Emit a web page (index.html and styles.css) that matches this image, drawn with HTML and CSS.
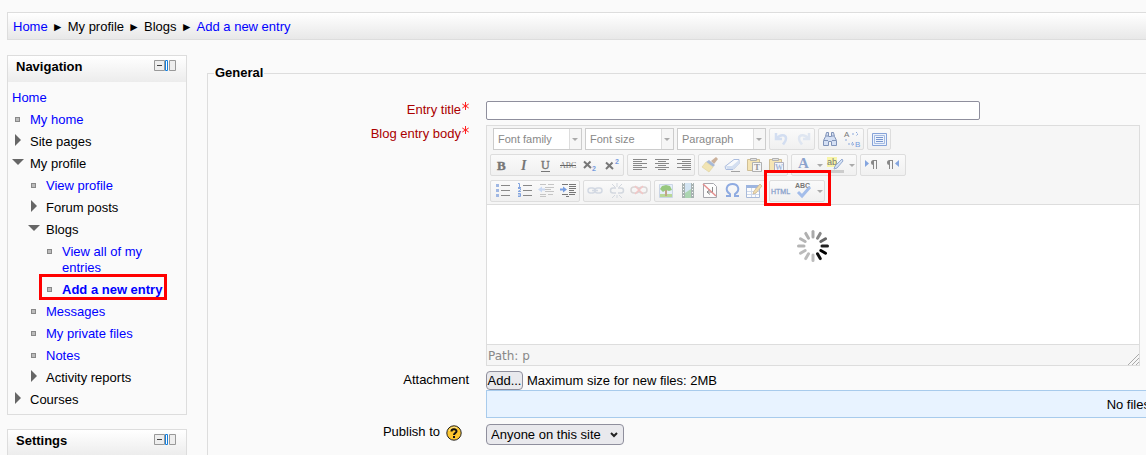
FILE: index.html
```html
<!DOCTYPE html>
<html lang="en">
<head>
<meta charset="utf-8">
<title>Add a new entry</title>
<link rel="stylesheet" href="styles.css">
</head>
<body>
<nav class="crumbs" aria-label="Breadcrumb">
  <a href="#">Home</a><span class="sep">►</span><span>My profile</span><span class="sep">►</span><span>Blogs</span><span class="sep">►</span><a href="#">Add a new entry</a>
</nav>
<div class="page">
  <aside class="side">
    <section class="block">
      <header class="block-head">
        <h2>Navigation</h2>
        <svg class="dock" viewBox="0 0 22 11"><path class="dock-box" d="M.5.5h10v10H.5zM15.5.5h6v10h-6z"/><path class="dock-bar" d="M11.5.5h2v10h-2z"/><path class="dock-minus" d="M3 5.5h5"/></svg>
      </header>
      <ul class="tree">
        <li class="root"><a href="#">Home</a></li>
        <li class="leaf"><a href="#">My home</a></li>
        <li class="shut">Site pages</li>
        <li class="open">My profile
          <ul>
            <li class="leaf"><a href="#">View profile</a></li>
            <li class="shut">Forum posts</li>
            <li class="open">Blogs
              <ul>
                <li class="leaf"><a href="#">View all of my entries</a></li>
                <li class="leaf current"><a href="#">Add a new entry</a><span class="mark mark-nav"></span></li>
              </ul>
            </li>
            <li class="leaf"><a href="#">Messages</a></li>
            <li class="leaf"><a href="#">My private files</a></li>
            <li class="leaf"><a href="#">Notes</a></li>
            <li class="shut">Activity reports</li>
          </ul>
        </li>
        <li class="shut">Courses</li>
      </ul>
    </section>
    <section class="block">
      <header class="block-head">
        <h2>Settings</h2>
        <svg class="dock" viewBox="0 0 22 11"><path class="dock-box" d="M.5.5h10v10H.5zM15.5.5h6v10h-6z"/><path class="dock-bar" d="M11.5.5h2v10h-2z"/><path class="dock-minus" d="M3 5.5h5"/></svg>
      </header>
    </section>
  </aside>
  <main class="main">
    <form>
      <fieldset class="general">
        <legend>General</legend>
        <div class="row">
          <label class="label required" for="title">Entry title<svg class="star" viewBox="0 0 7 8"><path d="M3.5 0v8M.3 2l6.400 4M6.700 2L.3 6"/></svg></label>
          <input class="title" id="title" type="text">
        </div>
        <div class="row">
          <label class="label required" for="body">Blog entry body<svg class="star" viewBox="0 0 7 8"><path d="M3.5 0v8M.3 2l6.400 4M6.700 2L.3 6"/></svg></label>
          <div class="editor">
            <div class="tools">
              <div class="bar bar-first">
                <button type="button" class="combo"><span>Font family</span><i></i></button>
                <button type="button" class="combo"><span>Font size</span><i></i></button>
                <button type="button" class="combo"><span>Paragraph</span><i></i></button>
                <div class="group">
                  <button type="button" aria-label="Undo"><svg viewBox="0 0 20 20"><path d="M5 4v6h6M5.500 9.500C9 5 15 5 15 9.500c0 3-2 4.500-3 6" fill="none" stroke="#d3def1" stroke-width="2.500"/></svg></button>
                  <button type="button" aria-label="Redo"><svg viewBox="0 0 20 20"><path d="M16 4v6h-6M15.500 9.500C12 5 6 5 6 9.500c0 3 2 4.500 3 6" fill="none" stroke="#dfe6f1" stroke-width="2.500"/></svg></button>
                </div>
                <div class="group">
                  <button type="button" aria-label="Find"><svg viewBox="0 0 20 20" fill="#d5e0f4" stroke="#8093b8"><path d="M6.500 3.500h2v4h3v-4h2l1 4 2 4v5h-5v-4h-3v4h-5v-5l2-4z"/><path d="M4 11.500h4M12 11.500h4M6 7h2M12 7h2"/></svg></button>
                  <button type="button" aria-label="Find and replace"><svg viewBox="0 0 20 20"><text x="2" y="8" font-size="8">A</text><text class="digit" x="13" y="18" font-size="8">B</text><path d="M10 5h3M14 3l2 2-2 2M4 10v3M6 15h5M10 13l2 2-2 2" fill="none" stroke="#8da9dc" stroke-dasharray="2 1"/></svg></button>
                </div>
                <div class="group">
                  <button type="button" aria-label="Full screen"><svg viewBox="0 0 20 20" fill="none"><path d="M3.500 4.500h14v12h-14z" fill="#edf3fc" stroke="#86a3d8"/><path d="M5.500 6.500h10v8h-10z" stroke="#a5bbe2"/><path d="M7 8.500h7M7 10.500h7M7 12.500h7" stroke="#7896ce"/></svg></button>
                </div>
              </div>
              <div class="bar">
                <div class="group">
                  <button type="button" aria-label="Bold"><svg viewBox="0 0 20 20"><text class="serif" x="5" y="15" font-size="13" font-weight="bold" stroke="#777" stroke-width=".4">B</text></svg></button>
                  <button type="button" aria-label="Italic"><svg viewBox="0 0 20 20"><text class="serif" x="7" y="15" font-size="14" font-style="italic" font-weight="bold">I</text></svg></button>
                  <button type="button" aria-label="Underline"><svg viewBox="0 0 20 20"><text class="serif" x="5" y="14" font-size="12" stroke="#777" stroke-width=".4">U</text><path d="M5 16.500h9" stroke="#777"/></svg></button>
                  <button type="button" aria-label="Strikethrough"><svg viewBox="0 0 20 20"><text class="serif" x="2" y="13" font-size="8">ABC</text><path d="M2 10.500h16" stroke="#666"/></svg></button>
                  <button type="button" aria-label="Subscript"><svg viewBox="0 0 20 20"><path d="M4 6.500l7 6.500M10.500 6.500L4 13" stroke="#777" stroke-width="2"/><text class="digit" x="12" y="16" font-size="7" font-weight="bold">2</text></svg></button>
                  <button type="button" aria-label="Superscript"><svg viewBox="0 0 20 20"><path d="M4 7.500l7 6.500M10.500 7.500L4 14" stroke="#777" stroke-width="2"/><text class="digit" x="13" y="9" font-size="7" font-weight="bold">2</text></svg></button>
                </div>
                <div class="group">
                  <button type="button" aria-label="Align left"><svg viewBox="0 0 20 20"><path d="M4 4.500h14M4 6.500h9M4 8.500h14M4 10.500h9M4 12.500h14M4 14.500h9" stroke="#888"/></svg></button>
                  <button type="button" aria-label="Align center"><svg viewBox="0 0 20 20"><path d="M4 4.500h14M7 6.500h8M4 8.500h14M7 10.500h8M4 12.500h14M7 14.500h8" stroke="#888"/></svg></button>
                  <button type="button" aria-label="Align right"><svg viewBox="0 0 20 20"><path d="M4 4.500h14M9 6.500h9M4 8.500h14M9 10.500h9M4 12.500h14M9 14.500h9" stroke="#888"/></svg></button>
                </div>
                <div class="group soft">
                  <button type="button" aria-label="Clean up"><svg viewBox="0 0 20 20"><path d="M16 2l2 2-4 5-3-3z" fill="#bd9a7d"/><path d="M9 5l6 5-2 2-7-5z" fill="#8da5ce"/><path d="M6 7l7 5-4 5-7-5z" fill="#f0df9e" stroke="#d6c67f" stroke-width=".6"/></svg></button>
                  <button type="button" aria-label="Remove formatting"><svg viewBox="0 0 20 20"><path d="M12 4.500h5v4l-6 6H4l-1-3z" fill="#fafcff" stroke="#91a9d7"/><path d="M4 11l6 0 7-6v4l-6 5H5z" fill="#c9d8f0"/><path d="M9 16.500h9" stroke="#888"/></svg></button>
                  <button type="button" aria-label="Paste as plain text"><svg viewBox="0 0 20 20"><path d="M3.500 4.500h12v11h-12z" fill="#f5df9f" stroke="#c3ad76"/><path d="M6.500 3.500h6v2h-6z" fill="#ddd" stroke="#999"/><path d="M8.500 7.500h9v9h-9z" fill="#f8f8f8" stroke="#999"/><text class="serif" x="10" y="15" font-size="9" font-weight="bold">T</text></svg></button>
                  <button type="button" aria-label="Paste from Word"><svg viewBox="0 0 20 20"><path d="M3.500 4.500h12v11h-12z" fill="#f5df9f" stroke="#c3ad76"/><path d="M6.500 3.500h6v2h-6z" fill="#ddd" stroke="#999"/><path d="M8.500 7.500h9v9h-9z" fill="#f2f6ff" stroke="#99a"/><text class="serif blue" x="9" y="15" font-size="8" font-weight="bold">W</text></svg></button>
                </div>
                <div class="group">
                  <button type="button" class="wide" aria-label="Text color"><svg viewBox="0 0 20 20"><text class="serif blue" x="4" y="13" font-size="15" font-weight="bold">A</text><path d="M2 16.500h16" stroke="#bbb" stroke-width="3"/></svg><i></i></button>
                  <button type="button" class="wide" aria-label="Highlight color"><svg viewBox="0 0 20 20"><path d="M1 2h10v10H1z" fill="#f8f5a8"/><text x="1" y="10" font-size="9">ab</text><path d="M16 4l1 2-6 7-3 1 1-3z" fill="#d5e2f5" stroke="#95aad0"/><path d="M2 16.500h16" stroke="#ccc" stroke-width="3"/></svg><i></i></button>
                </div>
                <div class="group">
                  <button type="button" aria-label="Left to right"><svg viewBox="0 0 20 20"><path d="M3 5v7l4-3.500z" fill="#84a5df"/><path d="M11 5.500h4M11.500 5v9M14.500 5v9" stroke="#888"/><path d="M11.500 5a2.500 2.500 0 0 0 0 5z" fill="#888"/></svg></button>
                  <button type="button" aria-label="Right to left"><svg viewBox="0 0 20 20"><path d="M15 5v7l-4-3.500z" fill="#84a5df"/><path d="M5 5.500h4M5.500 5v9M8.500 5v9" stroke="#888"/><path d="M5.500 5a2.500 2.500 0 0 0 0 5z" fill="#888"/></svg></button>
                </div>
              </div>
              <div class="bar">
                <div class="group">
                  <button type="button" aria-label="Bulleted list"><svg viewBox="0 0 20 20"><path d="M9 4.500h9M9 9.500h9M9 14.500h9" stroke="#888"/><path d="M4 3h3v3H4zM4 8h3v3H4zM4 13h3v3H4z" fill="#9fb7e3"/></svg></button>
                  <button type="button" aria-label="Numbered list"><svg viewBox="0 0 20 20"><path d="M9 4.500h9M9 9.500h9M9 14.500h9" stroke="#888"/><path d="M4 2.500h1.500v4M4 6.500h3M4 7.500h2.500v1.500L4 10.500h3M4 12.500h2.500v3H4M4 14h2" stroke="#84a5df" fill="none"/></svg></button>
                  <button type="button" aria-label="Outdent"><svg viewBox="0 0 20 20"><path d="M4 3.500h6M12 3.500h6M9 6.500h9M9 8.500h6M9 10.500h9M4 13.500h6M12 13.500h5M4 15.500h6" stroke="#c5c5c5"/><path d="M2 8.500l4-3v6z" fill="#cad9f3"/><path d="M5 8.500h4" stroke="#cad9f3" stroke-width="2"/></svg></button>
                  <button type="button" aria-label="Indent"><svg viewBox="0 0 20 20"><path d="M4 3.500h6M11 3.500h7M11 5.500h7M11 7.500h7M11 9.500h5M11 11.500h7M4 13.500h6M11 13.500h6M8 15.500h3" stroke="#777"/><path d="M9 8.500l-4-3v6z" fill="#789ee0"/><path d="M2 8.500h4" stroke="#789ee0" stroke-width="2"/></svg></button>
                </div>
                <div class="group">
                  <button type="button" aria-label="Insert link"><svg viewBox="0 0 20 20" fill="none" stroke="#d3d9e3" stroke-width="1.500"><rect x="3" y="7" width="7" height="5" rx="2.500"/><rect x="10" y="7" width="7" height="5" rx="2.500"/><path d="M7 9.500h6"/></svg></button>
                  <button type="button" aria-label="Unlink"><svg viewBox="0 0 20 20" fill="none" stroke="#d3d8df" stroke-width="1.500"><path d="M9 7H6a2 2 0 0 0 0 5h3M11 7h3a2 2 0 0 1 0 5h-3"/><path d="M10 2v4M5 3l3 3M15 3l-3 3M10 14v3M8 14l-3 3M12 14l3 3" stroke-width="1"/></svg></button>
                  <button type="button" aria-label="Prevent automatic links"><svg viewBox="0 0 20 20" fill="none" stroke="#d9d4d4" stroke-width="1.500"><rect x="2" y="6" width="8" height="6" rx="3"/><rect x="10" y="6" width="8" height="6" rx="3"/><path d="M6 5l8 8M14 5l-8 8" stroke="#f3c6c6"/></svg></button>
                </div>
                <div class="group soft">
                  <button type="button" aria-label="Insert image"><svg viewBox="0 0 20 20"><path d="M3.500 3.500h13v13h-13z" fill="#e1edfc" stroke="#bdcbe0"/><path d="M4 13h12v3H4z" fill="#a6cf78"/><path d="M9 9h2v6H9z" fill="#b08864"/><path d="M4 8l2-3 4-1 4 1 2 4-3 1-3-1-3 2z" fill="#79b958"/></svg></button>
                  <button type="button" aria-label="Insert media"><svg viewBox="0 0 20 20"><path d="M4 2h12v15H4z" fill="#8f9d9c"/><path d="M7 2h6v15H7z" fill="#c8dff2"/><path d="M7 12l6-4v9H7z" fill="#94cb9b"/><path d="M5.500 2v15M14.500 2v15" stroke="#fff" stroke-dasharray="1 2"/></svg></button>
                  <button type="button" aria-label="Insert nonbreaking space"><svg viewBox="0 0 20 20" fill="none"><path d="M3.500 2.500h10l3 3v11h-13z" fill="#fff" stroke="#8c8c94"/><path d="M12.500 6v5H7M10 8.500l-3 2.500 3 2.500" stroke="#666"/><path d="M3 3l13 12" stroke="#df6c6c" stroke-width="1.500"/></svg></button>
                  <button type="button" aria-label="Insert custom character"><svg viewBox="0 0 20 20"><path d="M4 15h4v-2C2 9 5 3 10.500 3S19 9 13 13v2h4" fill="none" stroke="#6c92d9" stroke-width="2"/></svg></button>
                  <button type="button" aria-label="Insert table"><svg viewBox="0 0 20 20"><path d="M2.500 4.500h13v12h-13z" fill="#fff" stroke="#8fa7d1"/><path d="M2 4h14v3H2z" fill="#7f9fd8"/><path d="M3 10.500h12M3 13.500h12M7.500 7v9M11.500 7v9" stroke="#c2d0e8"/><path d="M16 3l2 2-6 7-3 1 1-3z" fill="#efd69a" stroke="#b99b6c" stroke-width=".7"/></svg></button>
                </div>
                <div class="group">
                  <button type="button" aria-label="Edit HTML source"><svg viewBox="0 0 20 20"><text class="blue" x="0" y="13" font-size="7" stroke="#8ca3cc" stroke-width=".3">HTML</text></svg></button>
                  <button type="button" class="wide" aria-label="Check spelling"><svg viewBox="0 0 20 20"><text x="1" y="7" font-size="7" font-weight="bold">ABC</text><path d="M4 11l4 4 8-9" fill="none" stroke="#a3bdea" stroke-width="3"/></svg><i></i></button>
                  <span class="mark mark-tool"></span>
                </div>
              </div>
            </div>
            <div class="canvas" id="body" role="textbox" aria-label="Blog entry body">
              <svg class="spinner" viewBox="-16 -16 32 32">
                <g stroke-width="3" stroke-linecap="round">
                  <path d="M9 0h5.500" stroke="#222"/>
                  <path d="M9 0h5.500" stroke="#000" transform="rotate(30)"/>
                  <path d="M9 0h5.500" stroke="#111" transform="rotate(60)"/>
                  <path d="M9 0h5.500" stroke="#bbb" transform="rotate(90)"/>
                  <path d="M9 0h5.500" stroke="#bbb" transform="rotate(120)"/>
                  <path d="M9 0h5.500" stroke="#bbb" transform="rotate(150)"/>
                  <path d="M9 0h5.500" stroke="#b5b5b5" transform="rotate(180)"/>
                  <path d="M9 0h5.500" stroke="#b5b5b5" transform="rotate(210)"/>
                  <path d="M9 0h5.500" stroke="#b0b0b0" transform="rotate(240)"/>
                  <path d="M9 0h5.500" stroke="#aaa" transform="rotate(270)"/>
                  <path d="M9 0h5.500" stroke="#888" transform="rotate(300)"/>
                  <path d="M9 0h5.500" stroke="#666" transform="rotate(330)"/>
                </g>
              </svg>
            </div>
            <div class="status"><span>Path: p</span><svg class="grip" viewBox="0 0 11 11"><path d="M0 11L11 0M4 11l7-7M8 11l3-3"/></svg></div>
          </div>
        </div>
        <div class="row">
          <span class="label">Attachment</span>
          <div class="attach">
            <div class="picker"><button type="button" class="add">Add...</button><span>Maximum size for new files: 2MB</span></div>
            <div class="files"><span>No files</span></div>
          </div>
        </div>
        <div class="row">
          <div class="label"><label for="publish">Publish to</label><svg class="help" viewBox="0 0 16 16"><circle cx="8" cy="8" r="7.200" fill="#fcc62f" stroke="#222"/><path d="M3 6a5.500 5.500 0 0 1 8-3" fill="none" stroke="#ffe99a"/><path d="M5.500 6.500C5.500 3.500 10.500 3.500 10.500 6.300 10.500 8 8 8 8 10" fill="none" stroke="#111" stroke-width="2"/><path d="M7 11h2v2H7z" fill="#111"/></svg></div>
          <div class="publish"><select id="publish"><option>Anyone on this site</option></select><svg class="chevron" viewBox="0 0 8 6"><path d="M1 1l3 3 3-3"/></svg></div>
        </div>
      </fieldset>
    </form>
  </main>
</div>
</body>
</html>
```
FILE: styles.css
```css
* { box-sizing: border-box; }
body {
  margin: 0;
  padding: 12px 0 0 7px;
  height: 100vh;
  overflow: hidden;
  background: #fafafa;
  color: #000;
  font: 13px/16px "Liberation Sans", Arial, sans-serif;
}
a { color: #00f; text-decoration: none; }
button, input, select { font: inherit; color: inherit; }

.crumbs {
  display: flex;
  height: 28px;
  padding: 6px 5px;
  border: 1px solid #ddd;
  border-right: 0;
  background: linear-gradient(#fff, #e8e8e8);
}
.sep { width: 20px; text-align: center; font-size: 12px; font-family: "Liberation Sans", Arial, sans-serif; }

.page { display: flex; gap: 20px; padding-top: 15px; }
.side { flex: 0 0 180px; display: flex; flex-direction: column; gap: 14px; }
.block { border: 1px solid #ddd; }
.block-head {
  display: flex;
  justify-content: space-between;
  height: 26px;
  padding: 4px 10px 0 8px;
  background: linear-gradient(#fff, #ececec);
}
.block-head h2 { margin: 0; font-size: 13px; line-height: 14px; }
.dock { width: 22px; height: 11px; }
.dock path { fill: none; }
.dock .dock-box { stroke: #999; fill: #eee; }
.dock .dock-bar { stroke: #1580dd; fill: #fff; }
.dock .dock-minus { stroke: #444; }

.tree { padding: 8px 4px 0; }
.tree, .tree ul { margin: 0; list-style: none; }
.tree ul { padding: 6px 0 0; }
.tree li { position: relative; padding: 0 0 6px 18px; }
.tree .root { padding-left: 0; }
.tree ul li { padding-left: 16px; }
.tree .open:has(ul) { padding-bottom: 0; }
.tree li::before { content: ""; position: absolute; }
.tree .root::before { display: none; }
.tree .leaf::before {
  left: 3px; top: 5px; width: 3px; height: 3px;
  border: 1px solid #888; background: #bbb;
}
.tree ul .leaf::before { left: 1px; }
.tree .shut::before {
  left: 3px; top: 0;
  border: 6px solid transparent; border-left-color: #666; border-right: 0;
}
.tree ul .shut::before { left: 1px; }
.tree .open::before {
  left: 0; top: 3px;
  border: 6px solid transparent; border-top-color: #666; border-bottom: 0;
}
.tree ul .open::before { left: -2px; }
.current a { font-weight: bold; white-space: nowrap; }
.mark { position: absolute; border: 3px solid #f00; pointer-events: none; }
.mark-nav { left: -7px; top: -8px; width: 128px; height: 26px; }

.main { flex: 1; min-width: 0; }
.general {
  margin: 10px 0 0;
  padding: 20px 0 5px 6px;
  min-width: 0;
  border: 1px solid #ddd;
  border-width: 1px 0 0 1px;
}
.general legend { padding: 0 1px; font-weight: bold; }
.row { display: grid; grid-template-columns: 255px 1fr; column-gap: 17px; margin-bottom: 5px; }
.label { display: flex; justify-content: flex-end; padding-top: 1px; }
.required { color: #a00; }
.star { width: 7px; height: 8px; margin-left: 1px; stroke: #f22; fill: none; }
.title {
  width: 494px;
  max-width: 100%;
  height: 19px;
  padding: 0 3px;
  border: 1px solid #8f8f9d;
  border-radius: 2px;
  background: #fff;
}

.editor { margin-right: 6px; border: 1px solid #ddd; background: #f6f6f6; }
.tools { display: flex; flex-direction: column; gap: 4px; padding: 2px 3px; border-bottom: 1px solid #ddd; }
.bar { display: flex; gap: 3px; height: 22px; }
.bar-first { padding-left: 3px; }
.group {
  position: relative;
  display: flex;
  border: 1px solid #ddd;
  border-radius: 2px;
  background: linear-gradient(#fafafa, #f0f0f0);
}
.group button {
  display: flex;
  align-items: center;
  justify-content: center;
  width: 22px;
  padding: 0;
  border: 0;
  background: none;
}
.group .wide { width: 32px; gap: 3px; }
.group svg { width: 20px; height: 20px; overflow: visible; }
.soft svg { opacity: .75; }
.group text { fill: #777; font-family: "Liberation Sans", Arial, sans-serif; }
.group .serif { font-family: "Liberation Serif", serif; }
.group .blue { fill: #8ca3cc; }
.group .digit { fill: #769bdd; }
.bar i { border: 3px solid transparent; border-top-color: #aaa; border-bottom: 0; }
.combo {
  display: flex;
  align-items: center;
  justify-content: space-between;
  width: 89px;
  padding: 0 3px 0 4px;
  border: 1px solid #ccc;
  background: linear-gradient(90deg, #fff 75px, #ddd 75px, #ddd 76px, #f6f6f6 76px);
  color: #888;
  font-size: 11px;
}
.mark-tool { left: -6px; top: -11px; width: 67px; height: 36px; }
.canvas { display: flex; justify-content: center; height: 139px; padding-top: 25px; background: #fff; }
.spinner { width: 32px; height: 32px; }
.status {
  display: flex;
  justify-content: space-between;
  align-items: flex-end;
  height: 21px;
  padding-left: 1px;
  border-top: 1px solid #ddd;
  color: #888;
  font: 12px/18px "DejaVu Sans", sans-serif;
}
.grip { width: 11px; height: 11px; stroke: #aaa; fill: none; }

.picker { display: flex; gap: 4px; align-items: center; }
.add {
  width: 37px;
  height: 19px;
  padding: 0;
  border: 1px solid #8f8f9d;
  border-radius: 4px;
  background: #e9e9ed;
}
.files {
  display: flex;
  justify-content: flex-end;
  height: 28px;
  padding-top: 6px;
  border: 1px solid #a8cbec;
  border-right: 0;
  background: #e8f3ff;
}
.files span { margin-right: -4px; white-space: nowrap; }
.help { width: 16px; height: 16px; margin: 1px 7px 0 6px; }
.publish { display: grid; justify-content: start; align-items: center; padding-top: 1px; }
.publish select, .chevron { grid-area: 1 / 1; }
.publish select {
  appearance: none;
  height: 21px;
  padding: 0 22px 0 4px;
  border: 1px solid #8f8f9d;
  border-radius: 4px;
  background: #e9e9ed;
}
.chevron { justify-self: end; width: 8px; height: 6px; margin-right: 6px; stroke: #222; stroke-width: 2; fill: none; pointer-events: none; }
```
